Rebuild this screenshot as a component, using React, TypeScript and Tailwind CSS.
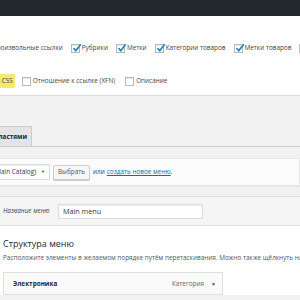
import React from "react";

function Cb({ checked }: { checked?: boolean }) {
  return (
    <span className="relative inline-block w-[9px] h-[9px] shrink-0 bg-white border border-[#b4b9be] shadow-[inset_0_1px_1px_rgba(0,0,0,0.1)]">
      {checked && (
        <svg viewBox="0 0 10 10" className="absolute left-[0px] top-[-2px] w-[10px] h-[10px]">
          <path d="M1.5 5.2 L3.8 7.6 L8.8 1.2" fill="none" stroke="#1e8cbe" strokeWidth="1.7" />
        </svg>
      )}
    </span>
  );
}

function Item({ label, checked }: { label: string; checked?: boolean }) {
  return (
    <span className="flex items-center gap-[2px] whitespace-nowrap">
      <Cb checked={checked} />
      <span>{label}</span>
    </span>
  );
}

export default function App() {
  return (
    <div
      className="w-[300px] h-[300px] overflow-hidden bg-[#f1f1f1] text-[#444] text-[6.4px] leading-[10px]"
      style={{ fontFamily: '"Open Sans", "Noto Sans", sans-serif' }}
    >
      <div className="h-[16px] bg-[#23282d]" />
      <div className="h-[80px] bg-white border-b border-[#ddd] pt-[27px]">
        <div className="flex items-center gap-[8px] h-[10px] ml-[-19px]">
          <Item label="Произвольные ссылки" checked />
          <Item label="Рубрики" checked />
          <Item label="Метки" checked />
          <Item label="Категории товаров" checked />
          <Item label="Метки товаров" checked />
          <Item label="Записи" checked />
        </div>
        <div className="flex items-center gap-[7px] h-[14px] mt-[21px] ml-[-36px]">
          <span className="flex items-center gap-[3px] whitespace-nowrap">
            <Cb />
            <span className="bg-[#f5e96e] h-[14px] leading-[14px] px-[2px]">Классы CSS</span>
          </span>
          <Item label="Отношение к ссылке (XFN)" />
          <span className="ml-[3px]">
            <Item label="Описание" />
          </span>
        </div>
      </div>

      <div className="h-[31px]" />
      <div className="h-[20px] border-b border-[#ccc] flex items-end">
        <div className="ml-[-60px] h-[20px] w-[92px] bg-[#e4e4e4] border border-b-0 border-[#ccc] flex items-center justify-end pr-[4px] font-bold text-[#23282d] whitespace-nowrap">
          Управление областями
        </div>
      </div>

      <div className="mt-[11px] h-[28px] bg-[#fbfbfb] border border-l-0 border-[#e5e5e5] flex items-center whitespace-nowrap shadow-[0_1px_1px_rgba(0,0,0,0.04)]">
        <div className="ml-[-60px] w-[110px] h-[16px] bg-white border border-[#ddd] flex items-center justify-end pr-[4px] gap-[5px] shadow-[inset_0_1px_2px_rgba(0,0,0,0.07)] text-[#32373c]">
          <span>Main menu (Main Catalog)</span>
          <span className="text-[4px]">▼</span>
        </div>
        <div className="ml-[3px] w-[37px] h-[15px] bg-[#f7f7f7] border border-[#ccc] rounded-[2px] flex items-center justify-center text-[#555] shadow-[0_1px_0_#ccc]">
          Выбрать
        </div>
        <span className="ml-[3px]">или</span>
        <span className="ml-[2px] text-[#0073aa] underline">создать новое меню</span>
        <span>.</span>
      </div>

      <div className="mt-[10px] bg-white border-t border-[#dfdfdf]">
        <div className="h-[29px] bg-[#f5f5f5] border-b border-[#dfdfdf] flex items-center pl-[3px]">
          <span className="italic w-[55px]">Название меню</span>
          <div className="w-[145px] h-[15px] bg-white border border-[#ddd] flex items-center pl-[4px] text-[7.2px] text-[#32373c] shadow-[inset_0_1px_2px_rgba(0,0,0,0.07)]">
            Main menu
          </div>
        </div>
        <div className="pl-[3px] pt-[12px]">
          <div className="text-[9px] leading-[12px] text-[#23282d]">Структура меню</div>
          <div className="mt-[3px] whitespace-nowrap text-[#555]">
            Расположите элементы в желаемом порядке путём перетаскивания. Можно также щёлкнуть на стрелку справа от элемента
          </div>
          <div className="mt-[9px] w-[220px] h-[23px] bg-[#fafafa] border border-[#dfdfdf] flex items-center pl-[9px] pr-[6px]">
            <span className="font-bold text-[#23282d] flex-1">Электроника</span>
            <span className="text-[#666]">Категория</span>
            <span className="ml-[7px] text-[5px] text-[#555]">▼</span>
          </div>
        </div>
      </div>
    </div>
  );
}
